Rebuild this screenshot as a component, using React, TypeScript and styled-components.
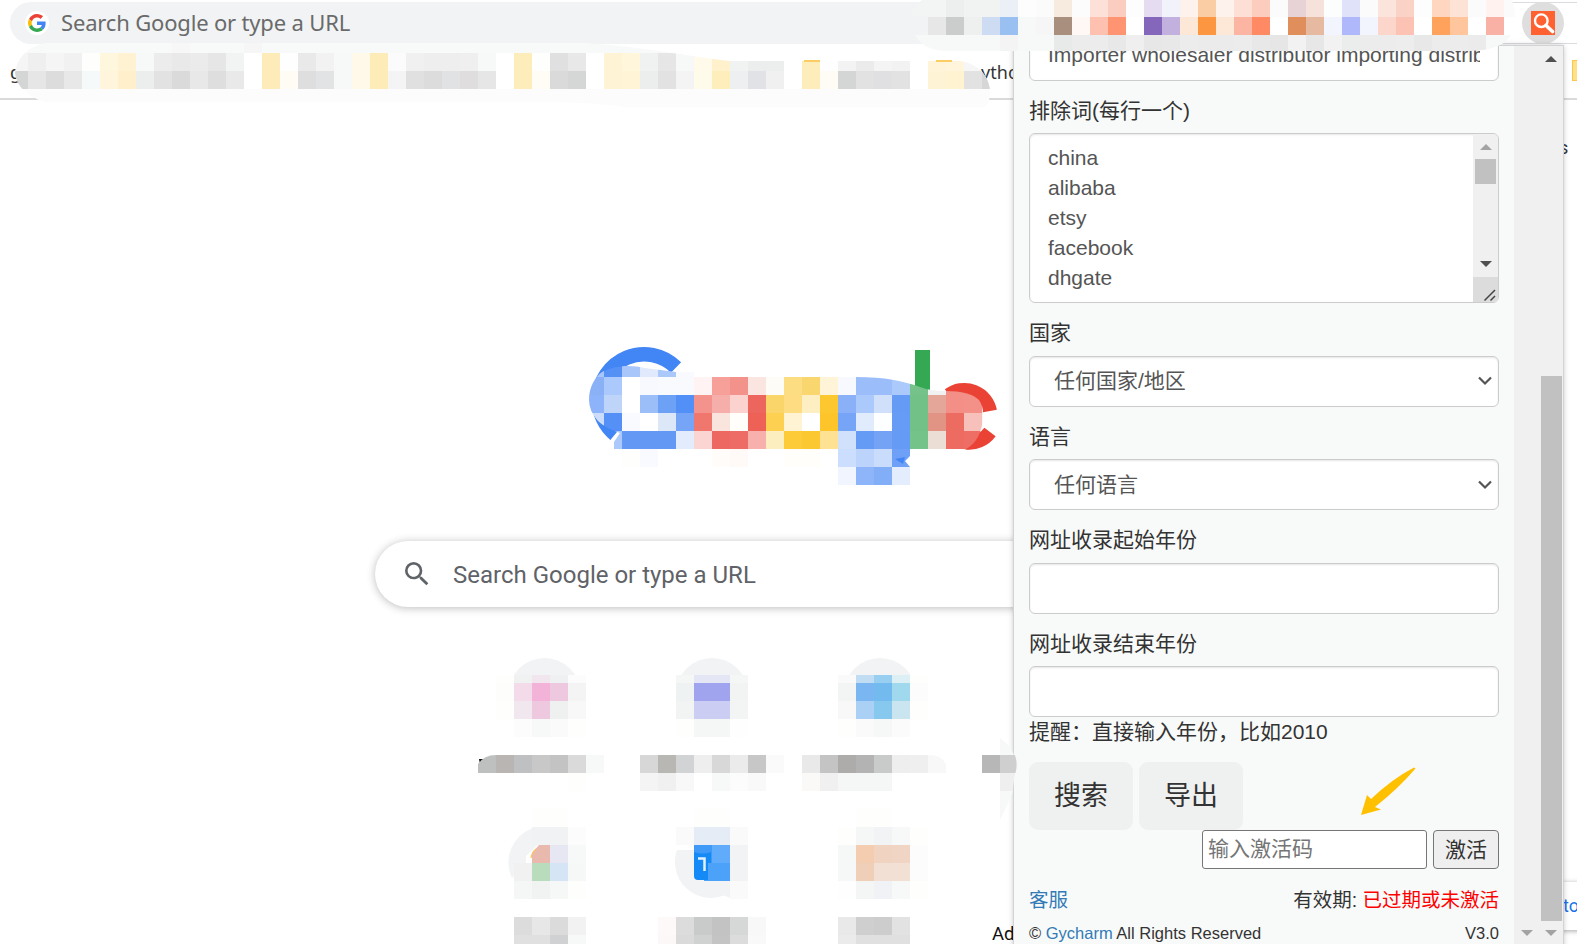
import React from 'react';
import styled, { createGlobalStyle } from 'styled-components';

const GlobalStyle = createGlobalStyle`
  html, body { margin: 0; padding: 0; background: #fff; }
  *, *::before, *::after { box-sizing: border-box; }
`;

const uiFont = `"Liberation Sans", "Noto Sans CJK SC", sans-serif`;
const segoe = `"Noto Sans", "Noto Sans CJK SC", sans-serif`;

/* ---------- pixelated patches ---------- */

type Row = [x: number, y: number, colors: string];
const CELL = 18;

const Cells = ({ rows }: { rows: Row[] }) => (
  <g shapeRendering="crispEdges">
    {rows.map(([x, y, colors]) =>
      colors.split(' ').map((c, i) =>
        c === '.' ? null : (
          <rect key={`${x}-${y}-${i}`} x={x + i * CELL} y={y} width={CELL} height={CELL} fill={`#${c}`} />
        ),
      ),
    )}
  </g>
);

const bookmarkRows: Row[] = [
  [10, 35, 'f8faf9 f8faf9 f8faf9 f8faf9 f8faf9 f8faf9 f8faf9 f8faf9 f8faf9 f7f7f7 f8faf9 f8faf9 f8faf9 f5f6f5'],
  [10, 53, 'f5f5f5 efefef f5f5f5 f1f1f1 fefefc fff6de fff2d2 f7f9f8 ececec e9e9ea ebebeb e6e6e6 f2f4f4 fff fdecba fefefe e9e9e9 f2f2f2 f7f9f8 fff9ea fdecb8 fbfbfb f0f0f0 eeeeee eeeeee efefef f7f8f8 fff fdedba fefefc e0e0e0 e8e8e8 fff fff3d6 fff6dc f0f1f1 e6e6e6 f7f8f8 fffaea fff1cb f1f2f2 eceeed eceded fff fdedba fefefe f3f3f3 ebebeb f4f4f4 f2f2f2 fff fff4d8 fff5dc f6f6f6 f6f6f6'],
  [10, 71, 'd4d6d5 e6e6e6 dcdcdc e8e8e8 f5f9fa fff5dc fff0cb eceeee e2e2e2 dadada e8e8e8 dedede e9e9e9 fff fdecba fefcf5 dedede e2e3e5 f7f9f8 fff9ea fdecb8 f4f4f4 e0e0e0 dcdcdc e1e2e4 dfdddd e6e6e6 fff fdedba fefcf5 dadada d5d7d6 fff fff3d6 fff4d6 eceeee e2e2e2 f4f4f5 fffbea fdeebc eeeff0 e0e2e5 f0f0f0 fff fdedba fefcf5 d4d6d5 e2e2e2 e0e0e2 e2e2e3 fff fff3d6 fff3d2 e2e2e2 d6d6d6'],
];

const toolbarRows: Row[] = [
  [910, -1, 'f3f5f4 f3f5f4 ecefed f1f3f2 f1f3f2 eaf0f6 fdfdfd fbfbfb f7ebe0 fcfcfc fde0d8 fbcdc0 fdfdfd e5dcf1 f2f3fa fdf3ec fbcda5 fef3ec fddfd6 fccdbe fbfbfb e7d3d5 f7e1db fcfdfd e0e2fa fbfbfc fbe4dc fbd3c6 fdfdfd ffd6c0 fde3d5 fbfbfb fff2ef fbfbfb'],
  [910, 17, 'f1f3f4 e7e7e7 cbcdcc eeefef cddcf3 9abff1 f7f9f8 f5f6f5 a98f7d fff8f4 ffc1af ff9472 fff 8466bb c2b1de fde8d7 fc9641 fde8d7 fdb5a3 ff8a64 fff e08e5b e6b9a1 f2f5fe afb8fb f2f5fe fdd6cb fcc2b3 fff ffa25c ffc59c fff fab1a5 fff'],
  [910, 35, 'f7f9f8 f7f9f8 f7f9f8 f7f9f8 f7f9f8 f4f4f4 f7f9f8 f7f9f8 e8e9e9 ececec ececec e8e8e8 efefef e7e7e7 e8e8e8 ececec ebebeb ebebeb ececec e8e8e8 e6e6e6 f1f2f1 e7e7e7 f1f2f1 ebecec ececec ececec ededed e8e8e8 ececec ececec ebebeb f7f9f8 f7f9f8'],
];

const logoTop: Row[] = [
  [586, 359, 'a9c6fb 5590f5 a9c6fb e0eafc abc8fb f8faff'],
  [586, 377, '8ab0f6 abc9fd fff f7f9ff f8fafe f8fafe fff3f3 f6a099 f2928a fae5e0 fdfcf7 fcdd81 fad66e fff4d8 f7f9ff 9bbefa 9bbefa abc9fb 75c38a f1f1f1 f29087 f29087 f29087'],
  [586, 395, '8db3fa bed4f9 fff 9bbef9 6da1f6 5290f7 f4938b f6aeaa fbd2ce ed665d fad56a fddc82 feefc3 fdc72f 8ab1f7 abc9fb d0e0fb 659bf5 72c287 e3a698 f38f86 f39189 fbe8e6'],
  [586, 413, 'cbddfb 5490f6 f8faff fff dce8f8 76a4f6 f0776d f9e4de fffefb ee6157 fed052 fff3d4 fff fec52a 76a4f6 e0ebfb fdfeff 669bf6 72c287 e29484 ec6c62 f8c0bb fdf3f2'],
  [586, 431, '. abc9fb 6399f5 6399f5 6399f5 e3ecfc fbd5d2 ec6860 ed6c65 f7b0ab fdeec0 fdca38 fbc832 ffe194 d2e1fb 659bf5 74a3f6 659bf5 74c389 ebded4 ed6b61 ee6d64'],
  [622, 449, 'fefefd f8faff . . . fffcfa fffaf8 . . fffefa fffefa . ccdefd bcd4fb cadcfb 6fa0f7'],
  [838, 467, 'f1f5ff 8eb4f9 82adf7 e4edfd'],
];

const tileRows: Row[] = [
  [496, 683, 'fdfdfc f4dbe9 f3b2d7 eec8df f4f4f4'],
  [496, 701, 'fefefc f1e8ef eec8df eff1f0 f8f8f8'],
  [514, 719, 'fcfcfc f7f9f8 fafafa fefefc'],
  [676, 683, 'eff2f3 a0a3ee a0a3ee f2f4f3'],
  [676, 701, 'f1f4f3 cbcdf2 cbcdf2 f2f5f4'],
  [676, 719, 'fefefc f5f7f6 f5f7f6 fefefe'],
  [838, 683, 'f3f4f4 7ab6f2 73baef a0d9ed fcfcfc'],
  [838, 701, 'f8f8f8 aad0f5 87c8ef cae5f0 fefefc'],
  [838, 719, 'fefefc fafafa f6f8f7 fbfbfb'],
  [640, 755, 'd7d7d7 b9b7b4 d2d3d5 eeeeee d8d8d8 ebebeb c6c7c6 f9faf9'],
  [568, 773, 'fefefc'],
  [640, 773, 'f4f4f4 f0f0f0 f8f8f8 . f7f9f8 fcfcfc f9f9f9'],
  [802, 773, 'fbf8f8 f0f0f0 f5f7f6 f5f7f6 f5f7f6'],
  [532, 809, 'fefefc fefefc'],
  [532, 827, 'f1f2f4 f1f2f4 fcfcfc'],
  [550, 845, 'e7e7f3 f7f9f8'],
  [514, 863, 'f1f1f1 b8dcbc d6e5f6 f6f8f7'],
  [514, 881, 'f5f7f6 f1f3f3 f6f8f7 fefefc'],
  [694, 809, 'fefefc fefefc'],
  [676, 827, 'fafafa e6ecf5 e6ecf5 fafafa'],
  [694, 845, '3f9af7 60acfa f2f3f4'],
  [694, 863, 'f1f3f4 4ba2f8 f2f3f4'],
  [730, 881, 'fafafa'],
  [856, 809, 'fefefc fefefc'],
  [838, 827, 'fefefc f5f7f6 f1f3f5 f7f9f8 fefefc'],
  [838, 845, 'f6f8f7 f4cdb0 f0d4c1 f0d5c4 fcfcfc'],
  [838, 863, 'f6f8f7 efcfb7 f2e0d5 f2e0d5 fcfcfc'],
  [838, 881, 'fefefe f4f6f5 f1f2f5 f7f9f8 fefefc'],
  [514, 917, 'dcdcdc e7e7e7 dbdbdc f2f2f2'],
  [514, 935, 'e0e0e0 e0e0e0 d0d1d3 f7f9f8'],
  [658, 917, 'fcf9f8 dcdcdc c9cbca c3c3c3 d6d8d7 f8f8f8'],
  [658, 935, 'fcf8f7 dadada d0d1d1 c4c4c4 dcdcdc f9f9f9'],
  [838, 917, 'e9e9e9 cfcfcf cdcdcd e2e2e2'],
  [838, 935, 'ebebeb e0e0e0 e0e0e0 e0e0e0'],
];

const tileCaps: Row[] = [
  [496, 665, 'fefefc eff2f1 f1e6ed eef0f1 fcfcfc'],
  [676, 665, 'f5f7f6 e4e6f5 e4e6f5 f5f7f6'],
  [838, 665, 'fafafa c0ddf3 98cef0 dceff4 fefefc'],
];

/* ---------- browser ---------- */

const Page = styled.div`
  position: relative;
  width: 1577px;
  height: 944px;
  overflow: hidden;
  background: #fff;
  display: flex;
  flex-direction: column;
`;

const Toolbar = styled.header`
  height: 44px;
  padding: 2px 0 0 10px;
  display: flex;
  flex: none;
`;

const Omnibox = styled.div`
  width: 980px;
  height: 42px;
  border-radius: 21px;
  background: #f1f3f4;
  display: flex;
  align-items: center;
  padding-left: 15px;
  gap: 12px;
  font: 22px ${segoe};
  color: #6a6a6a;
  white-space: nowrap;
`;

const OmniboxText = styled.span`
  letter-spacing: -0.17px;
  margin-top: -2px;
`;

const GoogleBadge = styled.span`
  width: 24px;
  height: 24px;
  border-radius: 50%;
  background: #fff;
  display: grid;
  place-items: center;
`;

const ToolbarEnd = styled.div`
  flex: 1;
  margin: 0 0 0 400px;
  border-top: 1px solid #dadce0;
  border-bottom: 1px solid #dadce0;
  display: flex;
  padding-left: 132px;
`;

const ExtensionButton = styled.div`
  width: 42px;
  height: 42px;
  margin-top: -1px;
  border-radius: 50%;
  background: #dedede;
  display: grid;
  place-items: center;
`;

const BookmarksBar = styled.nav`
  height: 56px;
  flex: none;
  border-bottom: 2px solid #dadada;
  display: flex;
  align-items: center;
  padding: 2px 0 0 10px;
  font: 18px ${segoe};
  color: #333;
`;

const BookmarkTail = styled.span`
  margin-left: 960px;
`;

const FolderSliver = styled.i`
  width: 5px;
  height: 21px;
  margin: -3px 0 0 auto;
  border: 1px solid #fbc94a;
  border-right: 0;
  background: #ffe08a;
`;

const NewTab = styled.main`
  flex: 1;
  min-height: 0;
  display: flex;
  flex-direction: column;
`;

const Shortcuts = styled.svg`
  display: block;
  margin-top: 43px;
  flex: none;
`;

const Logo = styled.svg`
  display: block;
  margin: 240px 0 0 580px;
  flex: none;
`;

const SearchBox = styled.div`
  margin: 51px 0 0 375px;
  width: 844px;
  height: 66px;
  flex: none;
  border-radius: 33px;
  background: #fff;
  box-shadow: 0 1px 8px rgba(32, 33, 36, 0.3);
  display: flex;
  align-items: center;
  padding: 1px 0 0 26px;
  gap: 20px;
  font: 24px Roboto, sans-serif;
  color: #5f6368;
`;

const SearchIcon = styled.svg`
  margin-top: -2px;
`;

const Overlay = styled.svg`
  position: absolute;
  left: 0;
  top: 0;
  pointer-events: none;
`;

const PageSnippet = styled.span<{ $x: number; $y: number; $color: string; $size: number }>`
  position: absolute;
  left: ${(p) => p.$x}px;
  top: ${(p) => p.$y}px;
  color: ${(p) => p.$color};
  font: ${(p) => p.$size}px / 24px Roboto, sans-serif;
`;

const PromoEdge = styled.div`
  position: absolute;
  right: -20px;
  top: 882px;
  width: 60px;
  height: 48px;
  background: #fff;
  box-shadow: 0 1px 5px rgba(0, 0, 0, 0.35);
`;

/* ---------- extension popup ---------- */

const Popup = styled.section`
  position: absolute;
  left: 1014px;
  top: 46px;
  width: 549px;
  height: 898px;
  display: flex;
  background: #f8faf9;
  overflow: hidden;
  font: 21px/30px ${uiFont};
  color: #333;
`;

const PopupShadow = styled.div`
  position: absolute;
  left: 1014px;
  top: 46px;
  width: 549px;
  height: 920px;
  box-shadow: 0 0 0 1px #d2d4d3, 0 0 6px rgba(0, 0, 0, 0.28);
`;

const Form = styled.div`
  width: 500px;
  flex: none;
  padding: 0 15px;
  margin-top: -16px;
`;

const Label = styled.div`
  height: 52.4px;
  padding-top: 15px;
`;

const Control = styled.div<{ $inset?: number }>`
  height: 51px;
  border: 1px solid #ccc;
  border-radius: 6px;
  background: #fff;
  box-shadow: inset 0 1px 2px rgba(0, 0, 0, 0.1);
  display: flex;
  align-items: center;
  justify-content: space-between;
  padding: 0 5px 0 ${(p) => p.$inset ?? 18}px;
  color: #555;
  white-space: nowrap;
`;

const Clipped = styled.span`
  width: 432px;
  overflow: hidden;
  margin-top: -1px;
`;

const TextArea = styled.div`
  height: 170px;
  border: 1px solid #ccc;
  border-radius: 6px;
  background: #fff;
  box-shadow: inset 0 1px 2px rgba(0, 0, 0, 0.1);
  display: flex;
  justify-content: space-between;
  color: #555;
  overflow: hidden;
`;

const Lines = styled.div`
  padding: 9px 0 0 18px;
  white-space: pre-line;
`;

const AreaScroll = styled.div`
  width: 25px;
  background: #f0f0f0;
  display: flex;
  flex-direction: column;
  align-items: center;
  padding-top: 10px;
`;

const Triangle = styled.i<{ $up?: boolean; $color: string }>`
  border: 6px solid transparent;
  border-top-width: ${(p) => (p.$up ? 0 : 6)}px;
  border-bottom-width: ${(p) => (p.$up ? 6 : 0)}px;
  border-${(p) => (p.$up ? 'bottom' : 'top')}-color: ${(p) => p.$color};
`;

const AreaThumb = styled.div`
  width: 21px;
  height: 25px;
  margin: 9px 0 77px;
  background: #c1c1c1;
`;

const Resizer = styled.div`
  width: 25px;
  flex: 1;
  margin-top: 10px;
  background: #dcdcdc;
  display: flex;
  align-items: flex-end;
  justify-content: flex-end;
`;

const Buttons = styled.div`
  display: flex;
  gap: 6px;
  margin-top: 15px;
`;

const BigButton = styled.button`
  width: 104px;
  height: 68px;
  border: 0;
  border-radius: 9px;
  padding: 0 0 5px;
  background: #eff0f0;
  color: #333;
  font: 27px ${uiFont};
`;

const Activation = styled.div`
  display: flex;
  justify-content: flex-end;
  gap: 6px;
`;

const CodeInput = styled.input`
  width: 225px;
  height: 39px;
  border: 1px solid #767676;
  border-radius: 3px;
  padding: 0 5px;
  background: #fff;
  font: 21px ${uiFont};
  &::placeholder { color: #757575; opacity: 1; }
`;

const ActivateButton = styled.button`
  width: 66px;
  height: 39px;
  border: 1px solid #767676;
  border-radius: 4px;
  padding: 0 0 2px;
  background: #efefef;
  color: #333;
  font: 21px ${uiFont};
`;

const FootRow = styled.div<{ $size: number; $top: number }>`
  display: flex;
  justify-content: space-between;
  margin-top: ${(p) => p.$top}px;
  font-size: ${(p) => p.$size}px;
  line-height: 30px;
  white-space: nowrap;
`;

const Link = styled.a`
  color: #337ab7;
`;

const Expired = styled.span`
  color: #f00;
`;

const Scrollbars = styled.div`
  width: 49px;
  background: #f0f0f0;
  display: flex;
`;

const Track = styled.div`
  flex: 1;
  display: flex;
  flex-direction: column;
  align-items: center;
  padding: 10px 0 0 1px;
`;

const Thumb = styled.div`
  width: 21px;
  height: 545px;
  margin: 314px 0 9px;
  background: #c1c1c1;
`;

const PageArrow = styled(Triangle)`
  margin-top: 874px;
`;

const Chevron = () => (
  <svg width="16" height="12" viewBox="0 0 16 12">
    <path d="M2 2.5 L8 8.5 L14 2.5" fill="none" stroke="#555" strokeWidth="2.2" />
  </svg>
);

export default function App() {
  return (
    <>
      <GlobalStyle />
      <Page>
        <Toolbar>
          <Omnibox>
            <GoogleBadge>
              <svg width="18" height="18" viewBox="0 0 48 48">
                <path fill="#EA4335" d="M24 9.5c3.5 0 6.700 1.200 9.200 3.600l6.900-6.900C35.900 2.400 30.500 0 24 0 14.600 0 6.500 5.400 2.600 13.200l8 6.200C12.400 13.700 17.700 9.500 24 9.500z" />
                <path fill="#4285F4" d="M47 24.600c0-1.600-.2-3.100-.4-4.600H24v9h12.900c-.6 3-2.200 5.500-4.700 7.200l7.700 6C44.400 38 47 31.800 47 24.600z" />
                <path fill="#FBBC05" d="M10.500 28.600c-.5-1.400-.8-3-.8-4.600s.3-3.200.8-4.600l-8-6.200C.9 16.500 0 20.100 0 24s.9 7.500 2.600 10.800l7.900-6.200z" />
                <path fill="#34A853" d="M24 48c6.500 0 11.900-2.100 15.900-5.800l-7.700-6c-2.200 1.500-4.900 2.300-8.200 2.300-6.300 0-11.600-4.200-13.500-9.900l-8 6.200C6.500 42.600 14.600 48 24 48z" />
              </svg>
            </GoogleBadge>
            <OmniboxText>Search Google or type a URL</OmniboxText>
          </Omnibox>
          <ToolbarEnd>
            <ExtensionButton>
              <svg width="24" height="24" viewBox="0 0 24 24">
                <rect width="24" height="24" fill="#ff6131" />
                <circle cx="10.300" cy="9.700" r="6.300" fill="none" stroke="#fff" strokeWidth="2.400" />
                <path d="M15 14.500 L21.500 20.500" stroke="#fff" strokeWidth="3.600" strokeLinecap="round" />
              </svg>
            </ExtensionButton>
          </ToolbarEnd>
        </Toolbar>
        <BookmarksBar>
          <span>g</span>
          <BookmarkTail>ytho</BookmarkTail>
          <FolderSliver />
        </BookmarksBar>
        <NewTab>
          <Logo width="430" height="150" viewBox="580 340 430 150">
            <defs>
              <clipPath id="logoBlob">
                <path d="M589 400 C589 387 595 377 602 372 C612 366 630 364 645 368 L676 372 H694 V377 H856 C885 377 903 381 920 387 Q930 391 945 391 Q970 391 979 400 Q984 407 983 418 Q981 441 966 449 H910 V456 L905 461 L910 467 V485 H830 V449 V470 H614 V442 L620 433 Q605 428 598 421 Q589 411 589 400Z" />
              </clipPath>
            </defs>
            <path d="M676 367.500 A45.300 45.300 0 0 0 598.700 399.500 A45.300 45.300 0 0 0 615 434.400" fill="none" stroke="#4285f4" strokeWidth="14.500" />
            <path d="M949 395 A26 26 0 0 1 990 411 M990 432 A26 26 0 0 1 966 442.500" fill="none" stroke="#ea4335" strokeWidth="14" />
            <rect x="915" y="350" width="15" height="50" fill="#34a853" />
            <g clipPath="url(#logoBlob)"><Cells rows={logoTop} /></g>
            <path d="M895 459 L905 457 L903 464Z" fill="#4285f4" />
          </Logo>
          <SearchBox>
            <SearchIcon width="32" height="32" viewBox="0 0 24 24">
              <path fill="#5f6368" d="M15.500 14h-.79l-.28-.27A6.470 6.470 0 0 0 16 9.500 6.500 6.500 0 1 0 9.500 16c1.610 0 3.090-.59 4.230-1.570l.27.28v.79l5 4.990L20.490 19l-4.990-5zm-6 0C7.010 14 5 11.990 5 9.500S7.010 5 9.500 5 14 7.010 14 9.500 11.990 14 9.500 14z" />
            </SearchIcon>
            <span>Search Google or type a URL</span>
          </SearchBox>
          <Shortcuts width="1014" height="294" viewBox="0 650 1014 294">
            <defs>
              <clipPath id="capRow"><rect x="480" y="675" width="460" height="8" /></clipPath>
              <clipPath id="labelOne"><path d="M478 773 V764 Q484 755 496 755 H604 V773Z" /></clipPath>
              <clipPath id="labelThree"><path d="M802 755 H932 Q943 756 946 765 V773 H802Z" /></clipPath>
            </defs>
            {[544.5, 712, 880].map((cx) => (
              <path key={cx} d={`M${cx - 36} 694 A36 36 0 0 1 ${cx + 36} 694 L${cx + 30} 675 H${cx - 30}Z`} fill="#f1f3f4" />
            ))}
            <rect x="490" y="675" width="450" height="25" fill="#fff" />
            <g clipPath="url(#capRow)"><Cells rows={tileCaps} /></g>
            <path d="M532 828.500 A36 36 0 0 0 512 878 L526 863 V856 L540 843 V828.500Z" fill="#f1f3f4" />
            <path d="M677 850 A36 36 0 0 0 724 895.500 L730 898 V881 L712 863 H694 V850Z" fill="#f1f3f4" />
            <Cells rows={tileRows} />
            <path d="M532 863 V853 L539 845 H550 V863Z" fill="#e9b9ae" />
            <path d="M531 858 Q532 852 536 849" stroke="#fbc45a" strokeWidth="1.200" fill="none" />
            <rect x="704" y="863" width="8" height="18" fill="#4ba2f8" />
            <path d="M694 852 Q703 855 711 852 V863 H708 V880 H698 Q694 880 694 876Z" fill="#148af7" />
            <path d="M698 858.500 H704.500 V871" fill="none" stroke="#e3f1fe" strokeWidth="2.500" />
            <path d="M479 759 H484 L480 764Z" fill="#111" />
            <g clipPath="url(#labelOne)"><Cells rows={[[478, 755, 'bebfbf b9b5b2 bfc0c2 c8c8c8 c3c3c3 dadada f7f9f8']]} /></g>
            <g clipPath="url(#labelThree)"><Cells rows={[[802, 755, 'e9e9e9 c4c4c4 aeacaa b3b3b3 c9cbca eeeeee efefef f8f8f8']]} /></g>
          </Shortcuts>
        </NewTab>

        <PageSnippet $x={992} $y={922} $color="#111" $size={18.5}>Ad</PageSnippet>
        <PageSnippet $x={1559} $y={136} $color="#333" $size={18}>s</PageSnippet>
        <PromoEdge />
        <PageSnippet $x={1563} $y={894} $color="#1a73e8" $size={18}>to</PageSnippet>
        <PopupShadow />

        <Popup>
          <Form>
            <Control><Clipped>Importer wholesaler distributor importing distributor</Clipped></Control>
            <Label>排除词(每行一个)</Label>
            <TextArea>
              <Lines>{'china\nalibaba\netsy\nfacebook\ndhgate'}</Lines>
              <AreaScroll>
                <Triangle $up $color="#a3a3a3" />
                <AreaThumb />
                <Triangle $color="#505050" />
                <Resizer>
                  <svg width="15" height="14" viewBox="0 0 15 14">
                    <path d="M1.500 12.500 L12 2 M7.500 12.500 L12 8" stroke="#444" strokeWidth="1.500" />
                  </svg>
                </Resizer>
              </AreaScroll>
            </TextArea>
            <Label>国家</Label>
            <Control $inset={24}>任何国家/地区<Chevron /></Control>
            <Label>语言</Label>
            <Control $inset={24}>任何语言<Chevron /></Control>
            <Label>网址收录起始年份</Label>
            <Control />
            <Label>网址收录结束年份</Label>
            <Control />
            <div>提醒：直接输入年份，比如2010</div>
            <Buttons>
              <BigButton>搜索</BigButton>
              <BigButton>导出</BigButton>
            </Buttons>
            <Activation>
              <CodeInput placeholder="输入激活码" />
              <ActivateButton>激活</ActivateButton>
            </Activation>
            <FootRow $size={19.5} $top={16}>
              <Link>客服</Link>
              <span>有效期: <Expired>已过期或未激活</Expired></span>
            </FootRow>
            <FootRow $size={16.5} $top={3}>
              <span>© <Link>Gycharm</Link> All Rights Reserved</span>
              <span>V3.0</span>
            </FootRow>
          </Form>
          <Scrollbars>
            <Track>
              <PageArrow $color="#a3a3a3" />
            </Track>
            <Track>
              <Triangle $up $color="#505050" />
              <Thumb />
              <Triangle $color="#a3a3a3" />
            </Track>
          </Scrollbars>
        </Popup>

        <Overlay width="1577" height="944" viewBox="0 0 1577 944">
          <defs>
            <clipPath id="bookmarkBlob">
              <path d="M45 43 H585 C640 46 690 57 730 61 H960 Q974 63 983 73 Q990 82 990 92 Q990 104 984 107 H625 Q590 102 540 102 H45 Q18 94 15 73 Q18 50 45 43Z" />
            </clipPath>
            <clipPath id="toolbarBlob">
              <path d="M922 0 Q909 8 911 22 Q915 50 945 51 H1470 Q1503 50 1511 35 Q1518 17 1512 0Z" />
            </clipPath>
          </defs>
          <g clipPath="url(#bookmarkBlob)">
            <rect x="10" y="40" width="985" height="49" fill="#f8faf9" />
            <rect x="10" y="89" width="985" height="18" fill="#fcfcfc" />
            <Cells rows={bookmarkRows} />
          </g>
          <path d="M804 61 H820 M936 61 H952" stroke="#fccd62" strokeWidth="2" />
          <g clipPath="url(#toolbarBlob)"><Cells rows={toolbarRows} /></g>
          <path d="M1000 738 Q1010 745 1014 755 H1000Z M1000 791 V820 Q1007 806 1013 791Z" fill="#f7f9f8" />
          <rect x="982" y="755" width="18" height="18" fill="#b7b7b7" />
          <path d="M1000 755 H1015 Q1018 764 1015.500 773 H1000Z" fill="#cfcfcf" />
          <path d="M1000 773 H1015 L1012.500 791 H1000Z" fill="#efefef" />
          <path d="M1361 815 L1367 795 L1371 799 Q1392 779 1414 767.500 L1415.500 768.500 Q1399 788 1375 807 L1381 809.500Z" fill="#ffc000" />
        </Overlay>
      </Page>
    </>
  );
}
